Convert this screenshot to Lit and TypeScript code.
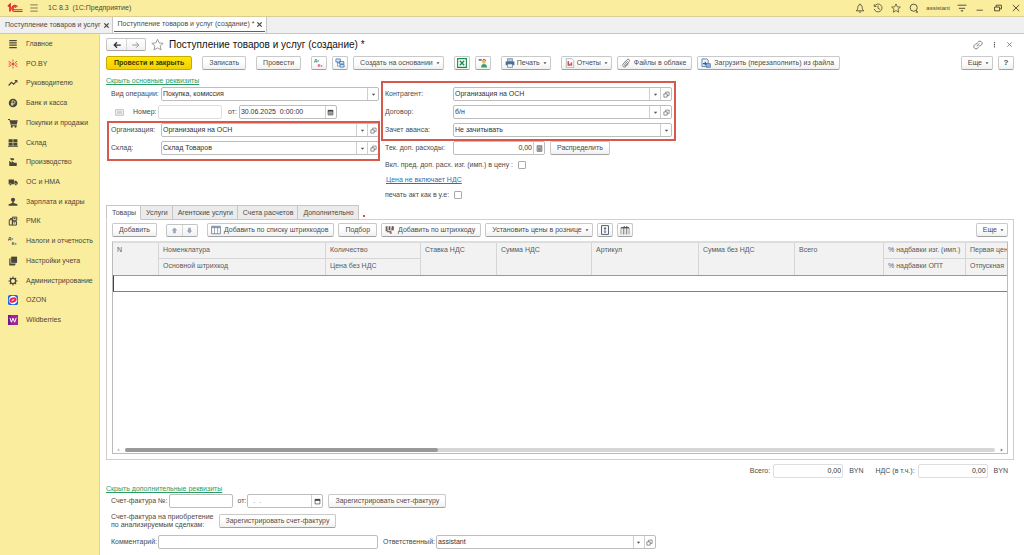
import { LitElement, html, css, svg, nothing, type TemplateResult, type SVGTemplateResult } from "lit";
import { customElement, state } from "lit/decorators.js";
import { classMap } from "lit/directives/class-map.js";

const ICONS: Record<string, SVGTemplateResult> = {
  lines: svg`<path d="M2 2.500h12M2 6.200h12M2 9.900h12M2 13.600h12" stroke="#4a463a" stroke-width="2"/>`,
  burst: svg`<g stroke="#e0483e" stroke-width="1.600" fill="none"><path d="M8 1v3M8 12v3M1 4l4 2M11 6l3.500-2.500M1 12l4-2M11 10l4 2.500M1 8h3M12 8h3"/><circle cx="8" cy="8" r="1.800" fill="#e0483e"/></g>`,
  trend: svg`<path d="M1 12l4.500-5 3.500 3 5-5.500" fill="none" stroke="#4a463a" stroke-width="2"/><path d="M10 3h5v5z" fill="#4a463a"/>`,
  coin: svg`<circle cx="8" cy="8" r="6.800" fill="#4a463a"/><path d="M6.500 12.500V4.500h2.500a2 2 0 0 1 0 4.500H5M5 10.700h4" fill="none" stroke="#fbed9e" stroke-width="1.300"/>`,
  cart: svg`<path d="M0 1.500h3l.6 2H15.500l-1.500 7H5L6 11.500h8V13H5L2.200 3H0z" fill="#4a463a"/><circle cx="6" cy="14" r="1.600" fill="#4a463a"/><circle cx="12" cy="14" r="1.600" fill="#4a463a"/>`,
  store: svg`<path d="M1 2h6.500v5H1zM8.500 2H15v5H8.500zM1 8h6.500v4.500H1zM8.500 8H15v4.500H8.500zM0 13h16v1.500H0z" fill="#4a463a"/>`,
  factory: svg`<path d="M2 14V6l4 3V6.500L10 9h4v5.500H2zM3 2h6l1 1.500L8.500 5H5z" fill="#4a463a"/>`,
  truck: svg`<path d="M1 4h8.500v7.500H1zM10.200 6H13l2.500 2.800v2.700h-5.300z" fill="#4a463a"/><circle cx="4" cy="12" r="1.700" fill="#4a463a" stroke="#fbed9e" stroke-width=".6"/><circle cx="12.500" cy="12" r="1.700" fill="#4a463a" stroke="#fbed9e" stroke-width=".6"/>`,
  person: svg`<circle cx="8" cy="4.500" r="3.300" fill="#4a463a"/><path d="M6.800 7h2.400v2.500L15 11.500V14H1v-2.500l5.800-2z" fill="#4a463a"/>`,
  pos: svg`<g fill="none" stroke="#4a463a" stroke-width="1.600"><path d="M7 1.800h7v5H7zM2 6h5v8.500H2zM7 8.500h6.500v6H7zM4 6V4h3M9 4h3M9 11h2.500"/></g>`,
  dk: svg`<text x="0" y="7" class="glyph" fill="#4a463a">Дт</text><text x="6" y="15" class="glyph" fill="#4a463a">Кт</text>`,
  books: svg`<path d="M5 1h9.500v10H5z" fill="#4a463a"/><path d="M2 4.500L4 3v9h8.500L11 15H2z" fill="#4a463a"/>`,
  gear: svg`<circle cx="8" cy="8" r="4.200" fill="none" stroke="#4a463a" stroke-width="2"/><path d="M8 .8v3M8 12.200v3M.8 8h3M12.200 8h3M3 3l1.800 1.800M11.200 11.200L13 13M3 13l1.800-1.800M11.200 4.800L13 3" stroke="#4a463a" stroke-width="1.700"/>`,
  ozon: svg`<rect width="16" height="16" rx="3" fill="#1566ee"/><circle cx="8" cy="8" r="6.800" fill="#fff"/><ellipse cx="8" cy="8" rx="6" ry="4" fill="#ee1d52" transform="rotate(-18 8 8)"/><ellipse cx="8" cy="8" rx="2.500" ry=".8" fill="#fff" transform="rotate(-18 8 8)"/>`,
  wb: svg`<rect width="16" height="16" fill="#a3239a"/><path d="M0 0h4v16H0z" fill="#6d1a86"/><path d="M3 4.500l2.400 7L8 5l2.600 6.500 2.600-7" fill="none" stroke="#fff" stroke-width="1.600"/>`,
  menu: svg`<path d="M2 3h12M2 8h12M2 13h12" stroke="#6b6443" stroke-width="1.300"/>`,
  bell: svg`<path d="M2 12.500h12c-2-1.500-2.300-3-2.500-5.500C11.300 4 10 2.800 8 2.800S4.700 4 4.500 7C4.300 9.500 4 11 2 12.500zM8 1v2M6.500 14.500h3" fill="none" stroke="#4f4a33" stroke-width="1.400"/>`,
  history: svg`<path d="M2.500 5A6.300 6.300 0 1 1 2 9.500M2 2v3.500h3.500M8 4v4.500l3.500 2" fill="none" stroke="#4f4a33" stroke-width="1.300"/>`,
  star: svg`<path d="M8 1.500l2 4.600 5 .4-3.800 3.300 1.200 4.900L8 12.100l-4.400 2.600 1.200-4.900L1 6.500l5-.4z" fill="none" stroke="currentColor" stroke-width="1.200"/>`,
  search: svg`<circle cx="7.500" cy="7.500" r="5.700" fill="none" stroke="#4f4a33" stroke-width="1.400"/><path d="M11 12l3 2.500h-3" fill="none" stroke="#4f4a33" stroke-width="1.600"/>`,
  filter: svg`<path d="M1 3.500h14M3 8.500h10" stroke="#4f4a33" stroke-width="1.500"/><path d="M5.500 11.500h5L8 14.500z" fill="#4f4a33"/>`,
  min: svg`<path d="M2.500 11.500h10" stroke="#4f4a33" stroke-width="1.400"/>`,
  restore: svg`<path d="M2.500 6.500h8v6h-8zM5 6.500v-3h8.500v6H10.500" fill="none" stroke="#4f4a33" stroke-width="1.500"/>`,
  close: svg`<path d="M3 3l10 10M13 3L3 13" stroke="currentColor" stroke-width="1.500"/>`,
  closeBold: svg`<path d="M3 3l10 10M13 3L3 13" stroke="#444" stroke-width="2.800"/>`,
  left: svg`<path d="M14 8H4M8 3.500L3.500 8 8 12.500" fill="none" stroke="#333" stroke-width="2"/>`,
  right: svg`<path d="M2 8h10M8 3.500L12.500 8 8 12.500" fill="none" stroke="#999" stroke-width="1.600"/>`,
  link: svg`<path d="M7 4.500l2.500-2.500h3l2 2v2.500L11.500 9.500H9M9 11l-2.500 3h-3l-2-2V9l3-3H7M6 10l4-4.500" fill="none" stroke="#666" stroke-width="1.300"/>`,
  dots: svg`<path d="M8 2v3M8 7v3M8 12v3" stroke="#555" stroke-width="2.500"/>`,
  dtkt: svg`<text x="0" y="7" class="glyph" fill="#23975b">Дт</text><text x="6" y="15" class="glyph" fill="#dd4038">Кт</text>`,
  struct: svg`<g fill="#dce9f7" stroke="#4a7db8" stroke-width="1.400"><path d="M1.500 1.500h7v5h-7zM7 5.500h7v4H7zM8 10.500h6.500v4H8z"/></g><path d="M4 6.500v6.500h4M4 8h3" fill="none" stroke="#4a7db8"/>`,
  excel: svg`<path d="M1 1h14v14H1z" fill="#fff" stroke="#1b8a50" stroke-width="1.800"/><path d="M4.500 4.500l7 7M11.500 4.500l-7 7" stroke="#1b8a50" stroke-width="2.200"/>`,
  agent: svg`<circle cx="9.500" cy="6" r="3" fill="#f0b45c"/><path d="M5 15c0-4 2-5.500 4.500-5.500S14.500 11 14.500 15z" fill="#39a06c"/><path d="M1 1.500h5v3H1z" fill="#7c7c7c"/><path d="M7 4c1-2.500 5-2.500 5.500.5" stroke="#8a4a24" stroke-width="1.500" fill="none"/>`,
  print: svg`<path d="M4 1h8v5H4z" fill="#b7c8dc" stroke="#5f7899"/><path d="M1 5.500h14v6H1z" fill="#4d6d94"/><path d="M4 9.500h8V15H4z" fill="#eef4fa" stroke="#4d6d94"/>`,
  report: svg`<path d="M2 1h9l3 3v11H2z" fill="#fff" stroke="#8793a5"/><path d="M4 12.500V5h2.500v7.500z" fill="#e0483e"/><path d="M6.500 12.500V9H9v3.500z" fill="#39a06c"/><path d="M9 12.500V7h2.500v5.500z" fill="#e0483e"/>`,
  clip: svg`<path d="M10.500 5L6 10.500c-1 1.500 1 2.500 2 1.200l5-6c2-3-1.500-5-3.500-3L3.500 9.500c-2.500 3.500 1.500 6.500 4.500 4l4-4.500" fill="none" stroke="#777" stroke-width="1.500"/>`,
  load: svg`<path d="M1.500 1.500h8l2 2v10h-10z" fill="#eef4fc" stroke="#4a6f9f" stroke-width="1.300"/><path d="M3 8h3V5l4 4-4 3.500V10H3z" fill="#2f5f95"/><path d="M8.500 9h6.500v6H8.500z" fill="#8fb6e2" stroke="#3a659c"/>`,
  up: svg`<path d="M8 1l6.500 7H11v6.500H5V8H1.500z" fill="#9aa7b4"/>`,
  down: svg`<path d="M8 15l6.500-7H11V1.500H5V8H1.500z" fill="#9aa7b4"/>`,
  grid: svg`<path d="M1 2h14v12H1z" fill="#fff" stroke="#66778f" stroke-width="1.300"/><path d="M1 2h14v3H1z" fill="#8a9cb5"/><path d="M5.500 3v11M10.500 3v11" stroke="#66778f"/>`,
  barcode: svg`<path d="M1 2h2v8H1zM4 2h1v8H4zM6 2h2v6H6zM9 2h1v5H9zM11 2h3v6h-3z" fill="#555"/><path d="M3 9h7l1 5H8l-1-2.500H3z" fill="#8a6f63"/><path d="M9 5h5v4H9z" fill="#b0584e" opacity=".6"/>`,
  expand: svg`<path d="M2.500 1h11v14h-11z" fill="#fff" stroke="#44546a" stroke-width="1.500"/><path d="M8 3l2.500 3h-5zM8 13l2.500-3h-5zM7.300 5h1.400v6H7.300z" fill="#44546a"/>`,
  columns: svg`<path d="M1.500 4.500h3.800V15M1.500 4.500V15M6.300 15V4.500h3.800V15M11 15V4.500h3.500V15" fill="none" stroke="#777" stroke-width="1.200"/><path d="M2 3h4V1.500h1.500V3H10V1.500h1.500V3H14v2H2z" fill="#555"/>`,
  caret: svg`<path d="M4 6h8l-4 5z" fill="#555"/>`,
  open: svg`<path d="M2 6.500h7.500V14H2zM6 6.500V2.500h8v7.500H9.500" fill="none" stroke="#666" stroke-width="1.600"/>`,
  calendar: svg`<path d="M2.500 3.500h11v10h-11z" fill="#fff" stroke="#444" stroke-width="1.600"/><path d="M2 2h12v4.500H2z" fill="#444"/>`,
  calendarGrid: svg`<path d="M2.500 3.500h11v10h-11z" fill="#ddd" stroke="#444" stroke-width="1.600"/><path d="M2 2h12v4H2z" fill="#444"/><path d="M5 7v6M8 7v6M11 7v6M3 9.500h10" stroke="#555"/>`,
  calc: svg`<path d="M2.500 1.500h11v13h-11z" fill="#ccc" stroke="#555" stroke-width="1.500"/><path d="M4 4.500h8M5.500 7v6M8 7v6M10.500 7v6" stroke="#555" stroke-width="1.300"/>`,
  card: svg`<path d="M1 3h14v10H1z" fill="#f4f4f4" stroke="#b5b5b5" stroke-width="1.400"/><path d="M3.500 6h9M3.500 8h9M3.500 10h9" stroke="#b5b5b5"/>`,
  tick: svg`<path d="M3 2l9 6-9 6z" fill="#777"/>`,
};

const icon = (name: string, extra = ""): TemplateResult =>
  html`<svg class="icon ${extra}" viewBox="0 0 16 16" aria-hidden="true">${ICONS[name]}</svg>`;

const SECTIONS: [string, string][] = [
  ["lines", "Главное"], ["burst", "PO.BY"], ["trend", "Руководителю"], ["coin", "Банк и касса"],
  ["cart", "Покупки и продажи"], ["store", "Склад"], ["factory", "Производство"], ["truck", "ОС и НМА"],
  ["person", "Зарплата и кадры"], ["pos", "РМК"], ["dk", "Налоги и отчетность"], ["books", "Настройки учета"],
  ["gear", "Администрирование"], ["ozon", "OZON"], ["wb", "Wildberries"],
];

const TABS = ["Товары", "Услуги", "Агентские услуги", "Счета расчетов", "Дополнительно"];

const COLUMNS: { top: string; bottom?: string; width?: number }[] = [
  { top: "N", width: 46 },
  { top: "Номенклатура", bottom: "Основной штрихкод", width: 167 },
  { top: "Количество", bottom: "Цена без НДС", width: 95 },
  { top: "Ставка НДС", width: 76 },
  { top: "Сумма НДС", width: 95 },
  { top: "Артикул", width: 107 },
  { top: "Сумма без НДС", width: 96 },
  { top: "Всего", width: 89 },
  { top: "% надбавки изг. (имп.)", bottom: "% надбавки ОПТ", width: 82 },
  { top: "Первая цен", bottom: "Отпускная" },
];

@customElement("app-root")
export class AppRoot extends LitElement {
  @state() private tab = 0;

  static styles = css`
    :host { display: flex; flex-direction: column; min-height: 100vh; background: #fff; color: #4a4a4a;
      font: 7px/10px "Liberation Sans", Arial, sans-serif; }
    * { box-sizing: border-box; }
    button, input, select { font: inherit; color: inherit; margin: 0; }
    button { border: 0; background: none; padding: 0; }
    .icon { width: 10px; height: 10px; flex: none; display: block; }
    .small { width: 7px; height: 7px; }
    .glyph { font: bold 7px "Liberation Sans", Arial, sans-serif; }
    .grow { flex: 1; }

    .top { display: flex; align-items: center; height: 17px; padding: 0 3px 0 7px; background: #fbed9e;
      border-bottom: 1px solid #d9cf95; color: #4f4a33; }
    .logo { width: 16px; height: 10px; margin-right: 6px; }
    .caption { margin-left: 9px; }
    .sys { display: flex; align-items: center; gap: 8px; }
    .user { font-size: 6px; margin: 0 -1px; }

    .windows { display: flex; height: 17px; background: #f0f0f0; border-bottom: 1px solid #c6c6c6; white-space: nowrap; }
    .window { display: flex; align-items: center; gap: 2px; padding: 0 2px 0 5px; border-right: 1px solid #c6c6c6; }
    .window.on { background: #fff; padding: 0 1px; }
    .window.on .cap { display: flex; align-items: center; gap: 2px; height: 15px; align-self: flex-start; padding: 0 2px 0 4px; border-bottom: 1px solid #009646; }

    .body { display: flex; flex: 1; }
    .side { width: 100px; flex: none; background: #fbed9e; border-right: 1px solid #ddd5a5; }
    .sections { list-style: none; margin: 0; padding: 0; height: 296px; display: flex; flex-direction: column; }
    .sections li { flex: 1; display: flex; }
    .section { display: flex; align-items: center; gap: 8px; padding-left: 8px; color: #4a463a; text-decoration: none; white-space: nowrap; }

    .main { flex: 1; min-width: 0; display: flex; flex-direction: column; padding: 3px 10px 6px 6px; }
    .titlebar { display: flex; align-items: center; height: 15px; }
    .pair { display: flex; height: 13px; border: 1px solid #c4c4c4; border-bottom-color: #a5a5a5; border-radius: 2px; background: linear-gradient(#fff, #f1f1f1); }
    .pair button { width: 19px; display: grid; place-items: center; }
    .pair.wide button { width: 15px; }
    .pair button + button { border-left: 1px solid #d5d5d5; }
    .fav { color: #999; margin: 0 5px; }
    .fav .icon { width: 13px; height: 13px; }
    h1 { font: 10px/14px "Liberation Sans", Arial, sans-serif; color: #111; margin: 0; flex: 1; }
    .formtools { display: flex; align-items: center; gap: 8px; padding-right: 1px; color: #555; }

    .bar { display: flex; align-items: center; gap: 5px; height: 14px; margin-top: 4px; }
    .wide { margin-left: 5px; }
    .btn { display: flex; align-items: center; justify-content: center; gap: 2px; height: 14px; min-width: 16px; padding: 0 6px;
      border: 1px solid #c9c9c9; border-bottom-color: #a0a0a0; border-radius: 2px; background: linear-gradient(#fff 40%, #f0f0f0);
      white-space: nowrap; flex: none; }
    .btn.square { padding: 0; width: 16px; }
    .btn.pic { padding: 0 5px 0 3px; gap: 3px; }
    .btn.drop { padding-right: 2px; gap: 2px; }
    .btn.main-btn { padding: 0 7px; background: linear-gradient(#ffe60a, #f3d000); border-color: #c8ab00; color: #3d3500; font-weight: bold; }
    .btn .tri { width: 6px; height: 6px; }
    .help { font-weight: bold; font-size: 8px; }

    .toggle { color: #2a9d62; align-self: flex-start; margin-top: 6px; }
    .form { display: grid; grid-template-columns: minmax(0, 268px) minmax(0, 287px); column-gap: 6px; padding-left: 5px; margin-top: 1px; }
    .col, .group { display: flex; flex-direction: column; gap: 4px; }
    .group { position: relative; }
    .group::after { content: ""; position: absolute; inset: -2px -1px -6px -4px; border: 2px solid #d9584e; pointer-events: none; }
    .group.roomy::after { inset: -6px -4px -4px -4px; }
    .row { display: flex; align-items: center; height: 14px; white-space: nowrap; }
    .row > label { width: 50px; flex: none; }
    .col.second .row > label { width: 68px; }
    .row > label.auto, .col.second .row > label.auto { width: auto; }
    .field { display: flex; flex: 1; min-width: 0; height: 14px; border: 1px solid #bdbdbd; border-radius: 2px; background: #fff; color: #333; }
    .field input, .field select { flex: 1; width: 100%; min-width: 0; border: 0; padding: 0 1px; background: none; appearance: none; outline: none; }
    .field input::placeholder { color: #777; opacity: 1; white-space: pre; }
    .field button { width: 11px; flex: none; border-left: 1px solid #cfcfcf; display: grid; place-items: center; }
    .field .mark { width: 11px; margin-left: -11px; border-left: 1px solid #cfcfcf; display: grid; place-items: center; pointer-events: none; }
    .field.num input { text-align: right; }
    .field.idle { border-color: #dedede; }
    .w64 { flex: 0 0 64px; }
    .w70 { flex: 0 0 70px; }
    .w76 { flex: 0 0 76px; }
    .w92 { flex: 0 0 92px; }
    .w98 { flex: 0 0 98px; }
    .w220 { flex: 0 1 220px; }
    .number { padding-left: 4px; }
    .number .icon { width: 9px; height: 9px; margin-right: 9px; }
    .number .small { width: 7px; height: 7px; margin: 0; }
    .row > label.no { width: 25px; }
    .row > label.from { width: auto; margin: 0 2px 0 6px; }
    .gap { margin-left: 5px; }
    .check { appearance: none; width: 8px; height: 8px; border: 1px solid #aaa; border-radius: 1px; background: #fff; margin-left: 5px; }
    .check:checked { background: #2a9d62; }
    .extras { display: flex; flex-direction: column; gap: 5px; padding-top: 1px; }
    .extras .row { height: 10px; }
    .vat { color: #2f6fb5; align-self: flex-start; margin-left: 1px; }

    .tabs { display: flex; margin-top: 5px; height: 15px; margin-bottom: -1px; }
    .tab { border: 1px solid #c6c6c6; border-left-width: 0; background: #ebebeb; padding: 0 4px 0 5px; position: relative; }
    .tab:first-child { border-left-width: 1px; }
    .tab.on { background: #fff; border-bottom-color: #fff; }
    .dot { width: 2px; height: 2px; background: #e0483e; align-self: flex-end; margin: 0 0 3px 4px; }
    .panel { flex: 1; display: flex; flex-direction: column; border: 1px solid #cfcfcf; padding: 0 5px 5px; }
    .panel > .bar { margin-top: 3px; gap: 4px; }
    .tablebox { flex: 1; min-height: 60px; margin-top: 4px; border: 1px solid #bbb; border-top: 2px solid #ddd; display: flex; flex-direction: column; overflow: hidden; }
    table { table-layout: fixed; border-collapse: separate; border-spacing: 0; width: 100%; color: #5a5a5a; }
    th { font-weight: normal; text-align: left; vertical-align: top; background: #f2f2f2; height: 16px; padding: 2px 0 3px 4px;
      line-height: 10px; border-right: 1px solid #d6d6d6; white-space: nowrap; }
    th.split { border-bottom: 1px solid #d6d6d6; }
    th.last { border-right: 0; }
    td.first { border-left: 1px solid #444; }
    td { height: 17px; padding: 0; border-top: 1px solid #999; border-bottom: 1px solid #b9696c; }
    .scroll { display: flex; align-items: center; gap: 5px; height: 6px; margin-top: auto; padding: 0 3px; }
    .track { flex: 1; height: 4px; border-radius: 2px; background: #d6d6d6; }
    .thumb { width: 36%; height: 4px; border-radius: 2px; background: #999; }
    .scroll .icon { width: 4px; height: 4px; }
    .flip { transform: scaleX(-1); opacity: .5; }

    .totals { display: flex; align-items: center; justify-content: flex-end; margin-top: 4px; padding-right: 6px; height: 14px; }
    .totals .field { margin: 0 6px 0 3px; }
    .second-total { margin-left: 12px; }
    .footer { display: flex; flex-direction: column; padding-left: 5px; margin-top: 0; gap: 5px; }
    .footer .row > label { width: auto; margin-right: 1px; }
    .footer .row > label.from { margin-left: 5px; }
    .footer .tall { height: 16px; line-height: 8px; gap: 5px; }
    .footer .tall + .row { margin-top: 1px; }
  `;

  private button(text: string, opts: { pic?: string; drop?: boolean; cls?: string } = {}) {
    return html`<button class="btn ${opts.pic ? "pic" : ""} ${opts.drop ? "drop" : ""} ${opts.cls ?? ""}">${opts.pic ? icon(opts.pic) : nothing}<span>${text}</span>${opts.drop ? icon("caret", "tri") : nothing}</button>`;
  }

  private square(name: string, label: string, cls = "") {
    return html`<button class="btn square ${cls}" aria-label=${label}>${icon(name)}</button>`;
  }

  private lookup(id: string, value: string, cls = "") {
    return html`<span class="field ${cls}"><input id=${id} .value=${value}><button aria-label="Выбрать">${icon("caret", "small")}</button><button aria-label="Открыть">${icon("open", "small")}</button></span>`;
  }

  private choice(id: string, value: string) {
    return html`<span class="field"><select id=${id}><option>${value}</option></select><span class="mark">${icon("caret", "small")}</span></span>`;
  }

  render() {
    return html`
      <header class="top">
        <svg class="logo" viewBox="0 0 32 20" aria-label="1С">
          <path d="M2 7l4-4v14" fill="none" stroke="#de2b2b" stroke-width="3.500"/>
          <path d="M21 7.500a6.200 6.200 0 1 0-6 9.500h16M18 9.500a3 3 0 1 0-2.500 4h15.500" fill="none" stroke="#de2b2b" stroke-width="2.400"/>
        </svg>
        <button aria-label="Меню">${icon("menu")}</button>
        <span class="caption">1С 8.3&nbsp; (1С:Предприятие)</span>
        <span class="grow"></span>
        <div class="sys">
          <button aria-label="Уведомления">${icon("bell")}</button>
          <button aria-label="История">${icon("history")}</button>
          <button aria-label="Избранное">${icon("star")}</button>
          <button aria-label="Поиск">${icon("search")}</button>
          <span class="user">assistant</span>
          <button aria-label="Настройки">${icon("filter")}</button>
          <button aria-label="Свернуть">${icon("min")}</button>
          <button aria-label="Восстановить">${icon("restore")}</button>
          <button aria-label="Закрыть">${icon("close")}</button>
        </div>
      </header>
      <nav class="windows">
        <div class="window"><span>Поступление товаров и услуг</span><button aria-label="Закрыть вкладку">${icon("closeBold", "small")}</button></div>
        <div class="window on"><div class="cap"><span>Поступление товаров и услуг (создание) *</span><button aria-label="Закрыть вкладку">${icon("closeBold", "small")}</button></div></div>
      </nav>
      <div class="body">
        <nav class="side">
          <ul class="sections">${SECTIONS.map(([i, t]) => html`<li><a class="section" href="#">${icon(i)}<span>${t}</span></a></li>`)}</ul>
        </nav>
        <main class="main">
          <div class="titlebar">
            <div class="pair"><button aria-label="Назад">${icon("left")}</button><button aria-label="Вперед">${icon("right")}</button></div>
            <button class="fav" aria-label="В избранное">${icon("star")}</button>
            <h1>Поступление товаров и услуг (создание) *</h1>
            <div class="formtools">
              <button aria-label="Ссылка">${icon("link")}</button>
              <button aria-label="Действия">${icon("dots", "small")}</button>
              <button aria-label="Закрыть">${icon("close", "small")}</button>
            </div>
          </div>
          <div class="bar">
            ${this.button("Провести и закрыть", { cls: "main-btn" })}
            ${this.button("Записать", { cls: "wide" })}
            ${this.button("Провести", { cls: "wide" })}
            ${this.square("dtkt", "Проводки", "wide")}
            ${this.square("struct", "Структура")}
            ${this.button("Создать на основании", { drop: true })}
            ${this.square("excel", "Excel", "wide")}
            ${this.square("agent", "Контрагент")}
            ${this.button("Печать", { pic: "print", drop: true, cls: "wide" })}
            ${this.button("Отчеты", { pic: "report", drop: true, cls: "wide" })}
            ${this.button("Файлы в облаке", { pic: "clip" })}
            ${this.button("Загрузить (перезаполнить) из файла", { pic: "load" })}
            <span class="grow"></span>
            ${this.button("Еще", { drop: true })}
            ${this.button("?", { cls: "square help" })}
          </div>
          <a class="toggle" href="#">Скрыть основные реквизиты</a>
          <div class="form">
            <div class="col">
              <div class="row"><label for="op">Вид операции:</label>${this.choice("op", "Покупка, комиссия")}</div>
              <div class="row number">${icon("card")}<label class="no" for="no">Номер:</label>
                <span class="field idle w64"><input id="no"></span>
                <label class="from" for="date">от:</label>
                <span class="field w98"><input id="date" .value=${"30.06.2025  0:00:00"}><button aria-label="Календарь">${icon("calendarGrid", "small")}</button></span>
              </div>
              <div class="group">
                <div class="row"><label for="org">Организация:</label>${this.lookup("org", "Организация на ОСН")}</div>
                <div class="row"><label for="wh">Склад:</label>${this.lookup("wh", "Склад Товаров")}</div>
              </div>
            </div>
            <div class="col second">
              <div class="group roomy">
                <div class="row"><label for="partner">Контрагент:</label>${this.lookup("partner", "Организация на ОСН")}</div>
                <div class="row"><label for="contract">Договор:</label>${this.lookup("contract", "б/н")}</div>
                <div class="row"><label for="advance">Зачет аванса:</label>${this.choice("advance", "Не зачитывать")}</div>
              </div>
              <div class="row"><label for="costs">Тек. доп. расходы:</label>
                <span class="field num w92"><input id="costs" .value=${"0,00"}><button aria-label="Калькулятор">${icon("calc", "small")}</button></span>
                ${this.button("Распределить", { cls: "gap" })}
              </div>
              <div class="extras">
                <div class="row"><label class="auto" for="c1">Вкл. пред. доп. расх. изг. (имп.) в цену :</label><input class="check" type="checkbox" id="c1"></div>
                <a class="vat" href="#">Цена не включает НДС</a>
                <div class="row"><label class="auto" for="c2">печать акт как в у.е:</label><input class="check" type="checkbox" id="c2"></div>
              </div>
            </div>
          </div>
          <div class="tabs" role="tablist">
            ${TABS.map((t, i) => html`<button role="tab" class=${classMap({ tab: true, on: this.tab === i })} @click=${() => (this.tab = i)}>${t}</button>`)}
            <span class="dot"></span>
          </div>
          <section class="panel">
            <div class="bar">
              ${this.button("Добавить")}
              <div class="pair wide"><button aria-label="Вверх">${icon("up", "small")}</button><button aria-label="Вниз">${icon("down", "small")}</button></div>
              ${this.button("Добавить по списку штрихкодов", { pic: "grid", cls: "wide" })}
              ${this.button("Подбор")}
              ${this.button("Добавить по штрихкоду", { pic: "barcode" })}
              ${this.button("Установить цены в рознице", { drop: true })}
              ${this.square("expand", "Развернуть")}
              ${this.square("columns", "Колонки")}
              <span class="grow"></span>
              ${this.button("Еще", { drop: true })}
            </div>
            <div class="tablebox">
              <table>
                <colgroup>${COLUMNS.map((c) => (c.width ? html`<col style="width:${c.width}px">` : html`<col>`))}</colgroup>
                <thead>
                  <tr>${COLUMNS.map((c) => (c.bottom ? html`<th class="split ${c.width ? "" : "last"}">${c.top}</th>` : html`<th rowspan="2">${c.top}</th>`))}</tr>
                  <tr>${COLUMNS.filter((c) => c.bottom).map((c) => html`<th class=${c.width ? "" : "last"}>${c.bottom}</th>`)}</tr>
                </thead>
                <tbody><tr>${COLUMNS.map((_, i) => html`<td class=${i ? "" : "first"}></td>`)}</tr></tbody>
              </table>
              <div class="scroll">${icon("tick", "flip")}<div class="track"><div class="thumb"></div></div>${icon("tick")}</div>
            </div>
          </section>
          <div class="totals">
            <label for="sum">Всего:</label><span class="field num idle w70"><input id="sum" .value=${"0,00"} readonly></span><span>BYN</span>
            <label class="second-total" for="tax">НДС (в т.ч.):</label><span class="field num idle w70"><input id="tax" .value=${"0,00"} readonly></span><span>BYN</span>
          </div>
          <a class="toggle" href="#">Скрыть дополнительные реквизиты</a>
          <div class="footer">
            <div class="row"><label for="inv">Счет-фактура №:</label><span class="field w64"><input id="inv"></span>
              <label class="from" for="invdate">от:</label>
              <span class="field w76"><input id="invdate" placeholder="  .  ."><button aria-label="Календарь">${icon("calendar", "small")}</button></span>
              ${this.button("Зарегистрировать счет-фактуру", { cls: "gap" })}
            </div>
            <div class="row tall"><span>Счет-фактура на приобретение<br>по анализируемым сделкам:</span>${this.button("Зарегистрировать счет-фактуру")}</div>
            <div class="row"><label for="note">Комментарий:</label><span class="field w220"><input id="note"></span>
              <label class="from" for="resp">Ответственный:</label>${this.lookup("resp", "assistant", "w220")}
            </div>
          </div>
        </main>
      </div>
    `;
  }
}
